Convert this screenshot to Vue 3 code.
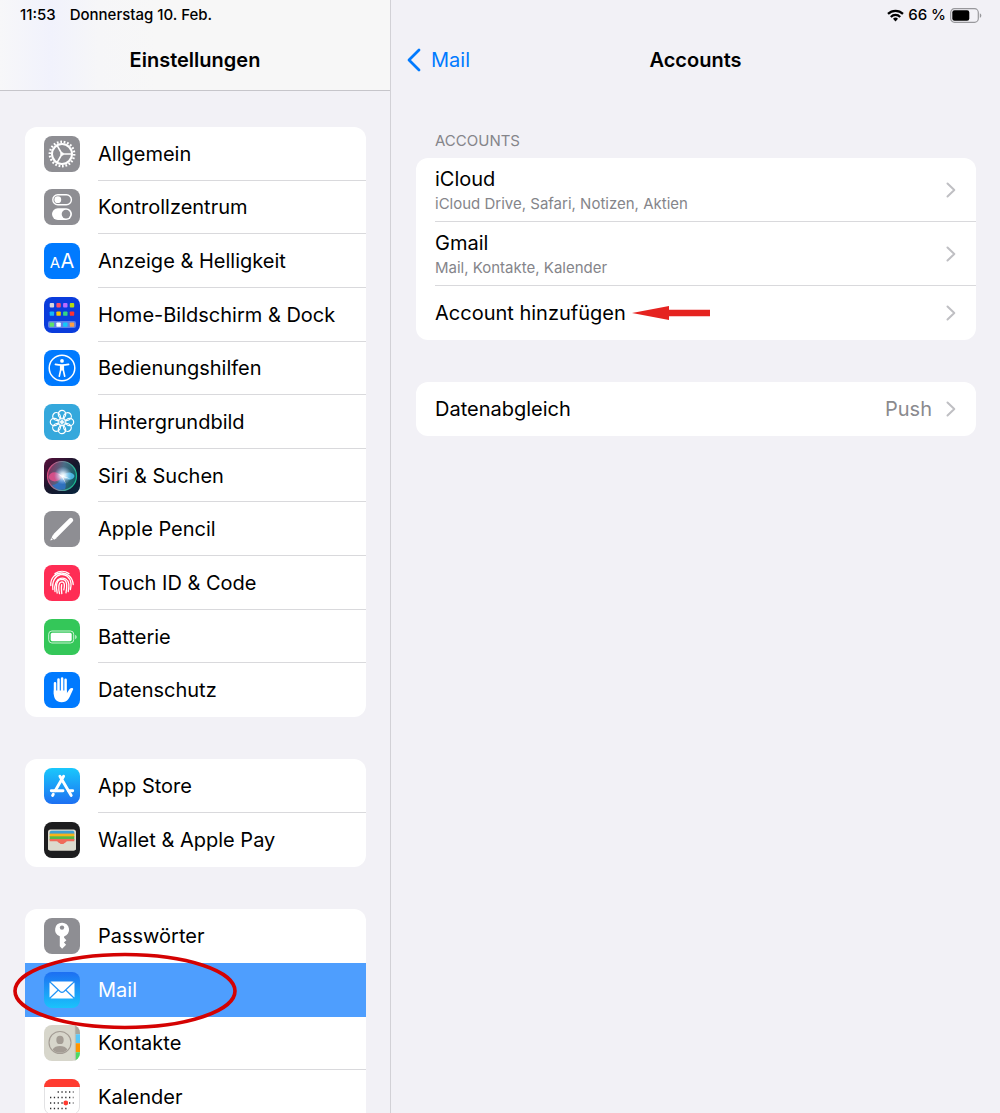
<template>
  <div class="settings">
    <aside class="sidebar">
      <header class="sidebar-header">
        <div class="status">
          <span>11:53</span>
          <span>Donnerstag 10. Feb.</span>
        </div>
        <h1 class="title">Einstellungen</h1>
      </header>

      <nav class="groups" aria-label="Einstellungen">
        <ul v-for="group in groups" :key="group.name" class="card" :class="group.name">
          <li v-for="item in group.items" :key="item.icon">
            <a
              href="#"
              class="row"
              :class="{ selected: item.icon === selected }"
              @click.prevent="selected = item.icon"
            >
              <svg class="icon" viewBox="0 0 36 36" aria-hidden="true">
                <g v-if="item.icon === 'general'">
                  <rect width="36" height="36" rx="8" fill="#8e8e93" />
                  <g fill="none" stroke="#fff">
                    <circle cx="18" cy="18" r="12.2" stroke-width="2.4" pathLength="44" stroke-dasharray="1 1" />
                    <circle cx="18" cy="18" r="10" stroke-width="2" />
                    <path d="M18 18h9.5M18 18l-4.8-8.4M18 18l-4.8 8.4" stroke-width="1.6" />
                  </g>
                  <circle cx="18" cy="18" r="1.8" fill="#fff" />
                </g>

                <g v-else-if="item.icon === 'control'">
                  <rect width="36" height="36" rx="8" fill="#8e8e93" />
                  <rect x="8.8" y="5.8" width="18.6" height="9.9" rx="4.95" fill="none" stroke="#fff" stroke-width="1.4" />
                  <circle cx="13.8" cy="10.7" r="3.4" fill="#fff" />
                  <rect x="8" y="19.3" width="20" height="11.6" rx="5.8" fill="#fff" />
                  <circle cx="22" cy="25.1" r="4.3" fill="#8e8e93" />
                </g>

                <g v-else-if="item.icon === 'display'">
                  <rect width="36" height="36" rx="8" fill="#007aff" />
                  <text class="glyph" x="5.8" y="25" font-size="15">A</text>
                  <text class="glyph" x="16.6" y="25" font-size="20">A</text>
                </g>

                <g v-else-if="item.icon === 'home'">
                  <rect width="36" height="36" rx="8" fill="#0a3cdc" />
                  <rect x="4" y="24" width="28" height="7" rx="2" fill="#fff" opacity=".35" />
                  <rect
                    v-for="(color, i) in homeTiles"
                    :key="i"
                    :x="5.7 + (i % 4) * 6.7"
                    :y="[6, 14.4, 25.4][Math.floor(i / 4)]"
                    width="4.4"
                    height="4.4"
                    rx="0.9"
                    :fill="color"
                  />
                </g>

                <g v-else-if="item.icon === 'access'">
                  <rect width="36" height="36" rx="8" fill="#007aff" />
                  <circle cx="18" cy="18" r="12.8" fill="none" stroke="#fff" stroke-width="1.5" />
                  <circle cx="18" cy="10.9" r="1.9" fill="#fff" />
                  <path
                    d="M11.4 14.4c4.3 1 8.9 1 13.2 0M15.3 26.2l1.4-6.2v-4M20.7 26.2L19.3 20v-4"
                    fill="none"
                    stroke="#fff"
                    stroke-width="1.6"
                    stroke-linecap="round"
                  />
                  <path d="M16 15h4v5.5h-4z" fill="#fff" />
                </g>

                <g v-else-if="item.icon === 'wallpaper'">
                  <rect width="36" height="36" rx="8" fill="#35a8dc" />
                  <g fill="none" stroke="#fff" stroke-width="1.2">
                    <ellipse
                      v-for="n in 8"
                      :key="n"
                      cx="18"
                      cy="10.3"
                      rx="3.7"
                      ry="4"
                      :transform="`rotate(${n * 45} 18 18)`"
                    />
                    <path
                      v-for="n in 8"
                      :key="'in' + n"
                      d="M18 18l-1.6-3.8"
                      stroke-width="0.9"
                      :transform="`rotate(${n * 45} 18 18)`"
                    />
                  </g>
                </g>

                <g v-else-if="item.icon === 'siri'">
                  <defs>
                    <linearGradient id="siri-bg" x1="0" y1="0" x2="1" y2="1">
                      <stop offset="0" stop-color="#5a0f3c" />
                      <stop offset=".5" stop-color="#16172c" />
                      <stop offset="1" stop-color="#06263e" />
                    </linearGradient>
                    <linearGradient id="siri-ring" x1="0" y1="0.3" x2="1" y2="0.5">
                      <stop offset="0" stop-color="#e0457c" />
                      <stop offset=".5" stop-color="#6f8fa0" />
                      <stop offset="1" stop-color="#16b98e" />
                    </linearGradient>
                    <linearGradient id="siri-orb" x1="0" y1="0.2" x2="1" y2="0.5">
                      <stop offset="0" stop-color="#8c2a58" />
                      <stop offset=".5" stop-color="#4a6c86" />
                      <stop offset="1" stop-color="#0f5a60" />
                    </linearGradient>
                    <radialGradient id="siri-glow">
                      <stop offset="0" stop-color="#fff" />
                      <stop offset=".3" stop-color="#e6f4ff" stop-opacity=".85" />
                      <stop offset="1" stop-color="#a0c8ff" stop-opacity="0" />
                    </radialGradient>
                  </defs>
                  <rect width="36" height="36" rx="8" fill="url(#siri-bg)" />
                  <circle cx="18" cy="18" r="14.5" fill="url(#siri-orb)" stroke="url(#siri-ring)" stroke-width="1.2" />
                  <path d="M18 19c3 4 5 8 3 12-5 2-10 0-13-4 4 0 8-3 10-8z" fill="#2e74ce" opacity=".8" />
                  <path d="M4.5 19c2-6 8-6 14-1-3 7-12 7-14 1z" fill="#e5508c" opacity=".85" />
                  <path d="M18 18c5-5 11-4 12.5 0-1.500 5-8 5-12.5 0z" fill="#49b4dc" />
                  <circle cx="19" cy="17.500" r="9" fill="url(#siri-glow)" />
                  <path d="M14 16l13 5-8-2 3 7-4-7z" fill="#fff" />
                </g>

                <g v-else-if="item.icon === 'pencil'">
                  <rect width="36" height="36" rx="8" fill="#8e8e93" />
                  <path d="M11.5 24.5L26.9 9.1" stroke="#fff" stroke-width="4.6" stroke-linecap="round" />
                  <path d="M9.2 23.5l3.6 3.6-2.7 1.7-2.5-2.4z" fill="#fff" />
                  <path d="M7.2 27l1.7 1.700-2.600.8z" fill="#fff" />
                </g>

                <g v-else-if="item.icon === 'touch'">
                  <rect width="36" height="36" rx="8" fill="#ff2d55" />
                  <g fill="none" stroke="#fff" stroke-width="1.3" stroke-linecap="round">
                    <path d="M11 8.6a12.2 12.2 0 0 1 14 0" />
                    <path d="M6.8 20.5C5.8 4.5 28 3.5 29.2 19.5" />
                    <path d="M8.9 24.5C6.5 6.5 25.5 5 27 18.5c.2 2-.1 4-.6 6" />
                    <path d="M11 26.500C8.6 11 23.5 9.5 24.8 19c.3 2.5 0 5-.6 7.5" />
                    <path d="M13.2 28c-1.4-6-1.4-13.5 4.6-13.7 6.5 0 5 8.700 4.2 13.500" />
                    <path d="M15.500 28.700c-.9-4-1.7-11.6 2.4-11.8 3.7 0 2.300 6 1.900 8" />
                    <path d="M17.8 28.7c-.4-3-.8-6-.1-9" />
                  </g>
                </g>

                <g v-else-if="item.icon === 'battery'">
                  <rect width="36" height="36" rx="8" fill="#34c759" />
                  <rect x="4.7" y="12" width="25" height="12" rx="3.2" fill="none" stroke="#c9f2d3" />
                  <rect x="6.7" y="13.8" width="21" height="8.4" rx="1.6" fill="#fff" />
                  <path d="M31.2 15.8c2 .8 2 3.6 0 4.4z" fill="#c9f2d3" />
                </g>

                <g v-else-if="item.icon === 'privacy'">
                  <rect width="36" height="36" rx="8" fill="#007aff" />
                  <path
                    d="M11 11.2V22M14.5 7.400V20M18.1 6.400V20M21.6 7.800V20"
                    fill="none"
                    stroke="#fff"
                    stroke-width="2.5"
                    stroke-linecap="round"
                  />
                  <path
                    d="M9.8 18.5h13v2.8c1-1.300 1.700-3 2.700-4.100.9-1.100 2.700-1.500 3.500-.7.5.5 0 1.200-.4 1.900-1.500 2.800-2.300 6-4.200 8.500-1.600 2.200-3.900 3.300-6.800 3.300-5.300 0-7.800-3.600-7.800-8.700z"
                    fill="#fff"
                  />
                </g>

                <g v-else-if="item.icon === 'appstore'">
                  <defs>
                    <linearGradient id="store-bg" x1="0" y1="0" x2="0" y2="1">
                      <stop offset="0" stop-color="#1ac8fc" />
                      <stop offset="1" stop-color="#1d70f2" />
                    </linearGradient>
                  </defs>
                  <rect width="36" height="36" rx="8" fill="url(#store-bg)" />
                  <g fill="none" stroke="#fff" stroke-width="2.9" stroke-linecap="round">
                    <path d="M19.6 8.3l-8.4 14.4M15.9 8.3L27.2 27.5" />
                    <path d="M7.3 22.7H19M24.6 22.7h4.1M9.3 26.3l-.7 1.2" />
                  </g>
                </g>

                <g v-else-if="item.icon === 'wallet'">
                  <rect width="36" height="36" rx="8" fill="#1d1d1f" />
                  <rect x="4" y="7.5" width="28" height="21" rx="2.5" fill="#dcdace" />
                  <path d="M5.7 12.5v-2q0-1.700 1.700-1.700h21.200q1.700 0 1.700 1.700v2z" fill="#3e9fd2" />
                  <path d="M5.7 11.6h24.6v3.500H5.7z" fill="#f8b218" />
                  <path d="M5.7 14.3h24.6v3.500H5.7z" fill="#55b948" />
                  <path d="M5.7 17h24.6v4H5.7z" fill="#f06a5a" />
                  <path d="M4 19.3h8.500c1.500 0 1.700.8 2.600 1.900 1.600 1.900 4.200 1.900 5.800 0 .9-1.100 1.100-1.900 2.600-1.900H32V26q0 2.500-2.500 2.500h-23Q4 28.500 4 26z" fill="#dcdace" />
                  <path d="M13 19h10c-1.500.2-1.600 1-2.400 1.900-1.400 1.600-3.800 1.600-5.200 0-.8-.9-.9-1.700-2.400-1.900z" fill="#f06a5a" />
                </g>

                <g v-else-if="item.icon === 'passwords'">
                  <rect width="36" height="36" rx="8" fill="#8e8e93" />
                  <path
                    d="M18 4.700a7 7 0 0 0-2.200 13.600v9.900l2.300 2.600 4-4-2.200-2.200 2.500-2.400-2.300-2.400v-1.400A7 7 0 0 0 18 4.700z"
                    fill="#fff"
                  />
                  <circle cx="18" cy="9.6" r="2.2" fill="#8e8e93" />
                </g>

                <g v-else-if="item.icon === 'mail'">
                  <defs>
                    <linearGradient id="mail-bg" x1="0" y1="0" x2="0" y2="1">
                      <stop offset="0" stop-color="#1d6ff2" />
                      <stop offset="1" stop-color="#1ac3fb" />
                    </linearGradient>
                  </defs>
                  <rect width="36" height="36" rx="8" fill="url(#mail-bg)" />
                  <rect x="5.5" y="9.5" width="25" height="17" rx="2" fill="#fff" />
                  <path
                    d="M6 10l10 9.5q2 1.800 4 0L30 10M6 26l8.300-8M30 26l-8.300-8"
                    fill="none"
                    stroke="#2294f6"
                    stroke-width="1.2"
                  />
                </g>

                <g v-else-if="item.icon === 'contacts'">
                  <defs>
                    <clipPath id="contacts-clip"><rect width="36" height="36" rx="8" /></clipPath>
                  </defs>
                  <g clip-path="url(#contacts-clip)">
                    <path d="M0 0h36v36H0z" fill="#d7d6cb" />
                    <path d="M31 0h5v9h-5z" fill="#a9a69c" />
                    <path d="M31.5 9.3H36V18h-4.5z" fill="#5ac8fa" />
                    <path d="M31.5 18.3H36V27h-4.5z" fill="#ff9500" />
                    <path d="M31.5 27.3H36V36h-4.5z" fill="#4cd964" />
                    <path d="M31.3 0v36" stroke="#bdbbb0" stroke-width="0.8" />
                  </g>
                  <circle cx="16" cy="17.5" r="11" fill="none" stroke="#a39c94" stroke-width="1.1" />
                  <ellipse cx="16" cy="14.9" rx="3.7" ry="4.2" fill="#a39c94" />
                  <path d="M8.6 24.5c1.300-2.700 4.300-3.600 7.400-3.600s6.100.9 7.400 3.600a10 10 0 0 1-14.800 0z" fill="#a39c94" />
                </g>

                <g v-else-if="item.icon === 'calendar'">
                  <rect x="0.5" y="0.5" width="35" height="35" rx="7.5" fill="#fff" stroke="#e2e2e4" />
                  <path d="M0 8a8 8 0 0 1 8-8h20a8 8 0 0 1 8 8z" fill="#ff3b30" />
                  <path
                    d="M13.6 13h16M6 18.5h23.5M6 24h23.5M6 29.5h16.5"
                    stroke="#2c2c2e"
                    stroke-width="1.3"
                    stroke-dasharray="1.3 2.5"
                  />
                  <circle cx="21.8" cy="24" r="2.4" fill="#ff3b30" />
                </g>
              </svg>
              <span class="label">{{ item.label }}</span>
            </a>
            <svg v-if="item.icon === 'mail'" class="marker" viewBox="0 0 224 78" aria-hidden="true">
              <ellipse cx="112" cy="39" rx="110" ry="36.5" fill="none" stroke="#d40202" stroke-width="3.6" />
            </svg>
          </li>
        </ul>
      </nav>
    </aside>

    <main class="detail">
      <header class="detail-header">
        <div class="status status-right">
          <svg class="wifi" viewBox="0 0 17 13" aria-hidden="true">
            <g fill="none" stroke="#000" stroke-width="2.2">
              <path d="M1 4.900a10.600 10.600 0 0 1 15 0" />
              <path d="M3.800 7.900a6.600 6.600 0 0 1 9.400 0" />
            </g>
            <path d="M8.500 12.500l-2.500-2.700a3.600 3.600 0 0 1 5 0z" />
          </svg>
          <span>66 %</span>
          <svg class="battery" viewBox="0 0 32 15" aria-hidden="true">
            <rect x="0.7" y="0.7" width="27.6" height="13.6" rx="3.8" fill="none" stroke="#98989c" stroke-width="1.2" />
            <rect x="2.3" y="2.3" width="17" height="10.4" rx="2.2" />
            <path d="M29.8 5.200c2 .8 2 3.800 0 4.600z" fill="#98989c" />
          </svg>
        </div>
        <div class="navbar">
          <a href="#" class="back" @click.prevent>
            <svg viewBox="0 0 15 24" aria-hidden="true">
              <path d="M13 2L3 12l10 10" fill="none" stroke="#007aff" stroke-width="2.8" stroke-linecap="round" stroke-linejoin="round" />
            </svg>
            Mail
          </a>
          <h2 class="title">Accounts</h2>
        </div>
      </header>

      <section class="content">
        <h3 class="section-title">ACCOUNTS</h3>
        <ul class="card">
          <li v-for="account in accounts" :key="account.name">
            <a href="#" class="account" @click.prevent>
              <span class="account-text">
                <span class="account-name">{{ account.name }}</span>
                <span v-if="account.services" class="services">{{ account.services }}</span>
              </span>
              <svg v-if="account.hint" class="arrow" viewBox="0 0 78 16" aria-hidden="true">
                <path d="M0 8L37 1v3.800h41v6.400H37V15z" fill="#e52320" />
              </svg>
              <svg class="chevron" viewBox="0 0 10 16" aria-hidden="true">
                <path d="M1.5 1.5L8.3 8l-6.8 6.5" />
              </svg>
            </a>
          </li>
        </ul>

        <ul class="card">
          <li>
            <a href="#" class="account" @click.prevent>
              <span class="account-text">Datenabgleich</span>
              <span class="value">Push</span>
              <svg class="chevron after-value" viewBox="0 0 10 16" aria-hidden="true">
                <path d="M1.5 1.5L8.3 8l-6.8 6.5" />
              </svg>
            </a>
          </li>
        </ul>
      </section>
    </main>
  </div>
</template>

<script setup>
import { ref } from 'vue';

const selected = ref('mail');

const groups = [
  {
    name: 'system',
    items: [
      { icon: 'general', label: 'Allgemein' },
      { icon: 'control', label: 'Kontrollzentrum' },
      { icon: 'display', label: 'Anzeige & Helligkeit' },
      { icon: 'home', label: 'Home-Bildschirm & Dock' },
      { icon: 'access', label: 'Bedienungshilfen' },
      { icon: 'wallpaper', label: 'Hintergrundbild' },
      { icon: 'siri', label: 'Siri & Suchen' },
      { icon: 'pencil', label: 'Apple Pencil' },
      { icon: 'touch', label: 'Touch ID & Code' },
      { icon: 'battery', label: 'Batterie' },
      { icon: 'privacy', label: 'Datenschutz' },
    ],
  },
  {
    name: 'store',
    items: [
      { icon: 'appstore', label: 'App Store' },
      { icon: 'wallet', label: 'Wallet & Apple Pay' },
    ],
  },
  {
    name: 'apps',
    items: [
      { icon: 'passwords', label: 'Passwörter' },
      { icon: 'mail', label: 'Mail' },
      { icon: 'contacts', label: 'Kontakte' },
      { icon: 'calendar', label: 'Kalender' },
    ],
  },
];

const accounts = [
  { name: 'iCloud', services: 'iCloud Drive, Safari, Notizen, Aktien' },
  { name: 'Gmail', services: 'Mail, Kontakte, Kalender' },
  { name: 'Account hinzufügen', hint: true },
];

// 4 x 2 app tiles, then the dock
const homeTiles = [
  '#d9d6dc', '#ff4f6a', '#bb6bff', '#b4d911',
  '#14b8f8', '#ffc300', '#33d685', '#ff3131',
  '#5ee26a', '#ffffff', '#12c8fa', '#ff9f43',
];
</script>

<style>
body {
  background: #f2f1f6;
}
</style>

<style scoped>
.settings {
  display: grid;
  grid-template-columns: 39fr 61fr;
  height: 100vh;
  overflow: hidden;
  background: #f2f1f6;
  color: #000;
  font-family: Inter, "Liberation Sans", sans-serif;
  font-size: 20px;
  line-height: 24px;
}

.sidebar,
.detail {
  min-width: 0;
}

.sidebar {
  overflow: hidden;
}

.detail {
  border-left: 1px solid #d2d1d6;
}

.sidebar-header {
  background: linear-gradient(to right, #f7f7f9, #f1f2fc 13%, #f6f6f8 25%, #f7f7f7 40%);
  border-bottom: 1px solid #c6c5ca;
}

.status {
  display: flex;
  align-items: center;
  gap: 14px;
  height: 30px;
  padding: 0 20px;
  font-size: 15px;
  font-weight: 500;
}

.status-right {
  justify-content: flex-end;
  gap: 4px;
  padding: 0 18px;
}

.wifi {
  width: 17px;
  height: 13px;
}

.battery {
  width: 32px;
  height: 15px;
}

.title {
  margin: 0;
  font-size: 20px;
  font-weight: 600;
  line-height: 60px;
  text-align: center;
}

.navbar {
  display: grid;
  grid-template-columns: 1fr auto 1fr;
  align-items: center;
}

.back {
  display: flex;
  align-items: center;
  gap: 10px;
  padding-left: 15px;
  color: #007aff;
  text-decoration: none;
}

.back svg {
  width: 15px;
  height: 24px;
}

.groups {
  display: flex;
  flex-direction: column;
  gap: 42px;
  padding: 36px 24px 36px 25px;
}

.card {
  display: grid;
  margin: 0;
  padding: 0;
  list-style: none;
  background: #fff;
  border-radius: 12px;
}

.groups .card {
  grid-auto-rows: 1fr;
}

.system {
  min-height: 590px;
}

.store {
  min-height: 108px;
}

.apps {
  min-height: 215px;
}

.card li {
  position: relative;
  display: grid;
}

.row {
  display: flex;
  align-items: center;
  gap: 18px;
  padding-left: 19px;
  color: inherit;
  text-decoration: none;
}

.icon {
  flex: none;
  width: 36px;
  height: 36px;
}

.glyph {
  fill: #fff;
}

.label {
  flex: 1;
  align-self: stretch;
  display: flex;
  align-items: center;
}

.card li + li .label {
  box-shadow: 0 -1px #d9d9dc;
}

.row.selected {
  background: #4e9efe;
  color: #fff;
}

.card li + li .selected .label,
.card li:has(.selected) + li .label {
  box-shadow: none;
}

.marker {
  position: absolute;
  z-index: 1;
  top: -11px;
  left: -12px;
  width: 224px;
  height: 78px;
  pointer-events: none;
}

.content {
  padding: 42px 24px 42px 25px;
}

.section-title {
  margin: 0 0 8px 19px;
  font-size: 15px;
  font-weight: 400;
  line-height: 18px;
  color: #85858a;
}

.content .card + .card {
  margin-top: 42px;
}

.account {
  display: flex;
  align-items: center;
  min-height: 54px;
  margin-left: 19px;
  padding-right: 20px;
  color: inherit;
  text-decoration: none;
}

.card li + li .account {
  box-shadow: 0 -1px #d9d9dc;
}

.account-text {
  display: flex;
  flex-direction: column;
  gap: 3px;
}

.account-text:has(.services) {
  padding: 9px 0 8px;
}

.services {
  font-size: 15px;
  line-height: 20px;
  color: #85858a;
}

.arrow {
  width: 78px;
  height: 16px;
  margin-left: 6px;
}

.value {
  margin-left: auto;
  color: #8a8a8e;
}

.chevron {
  width: 10px;
  height: 16px;
  margin-left: auto;
  fill: none;
  stroke: #bfbfc3;
  stroke-width: 2;
  stroke-linecap: round;
  stroke-linejoin: round;
}

.chevron.after-value {
  margin-left: 14px;
}
</style>
